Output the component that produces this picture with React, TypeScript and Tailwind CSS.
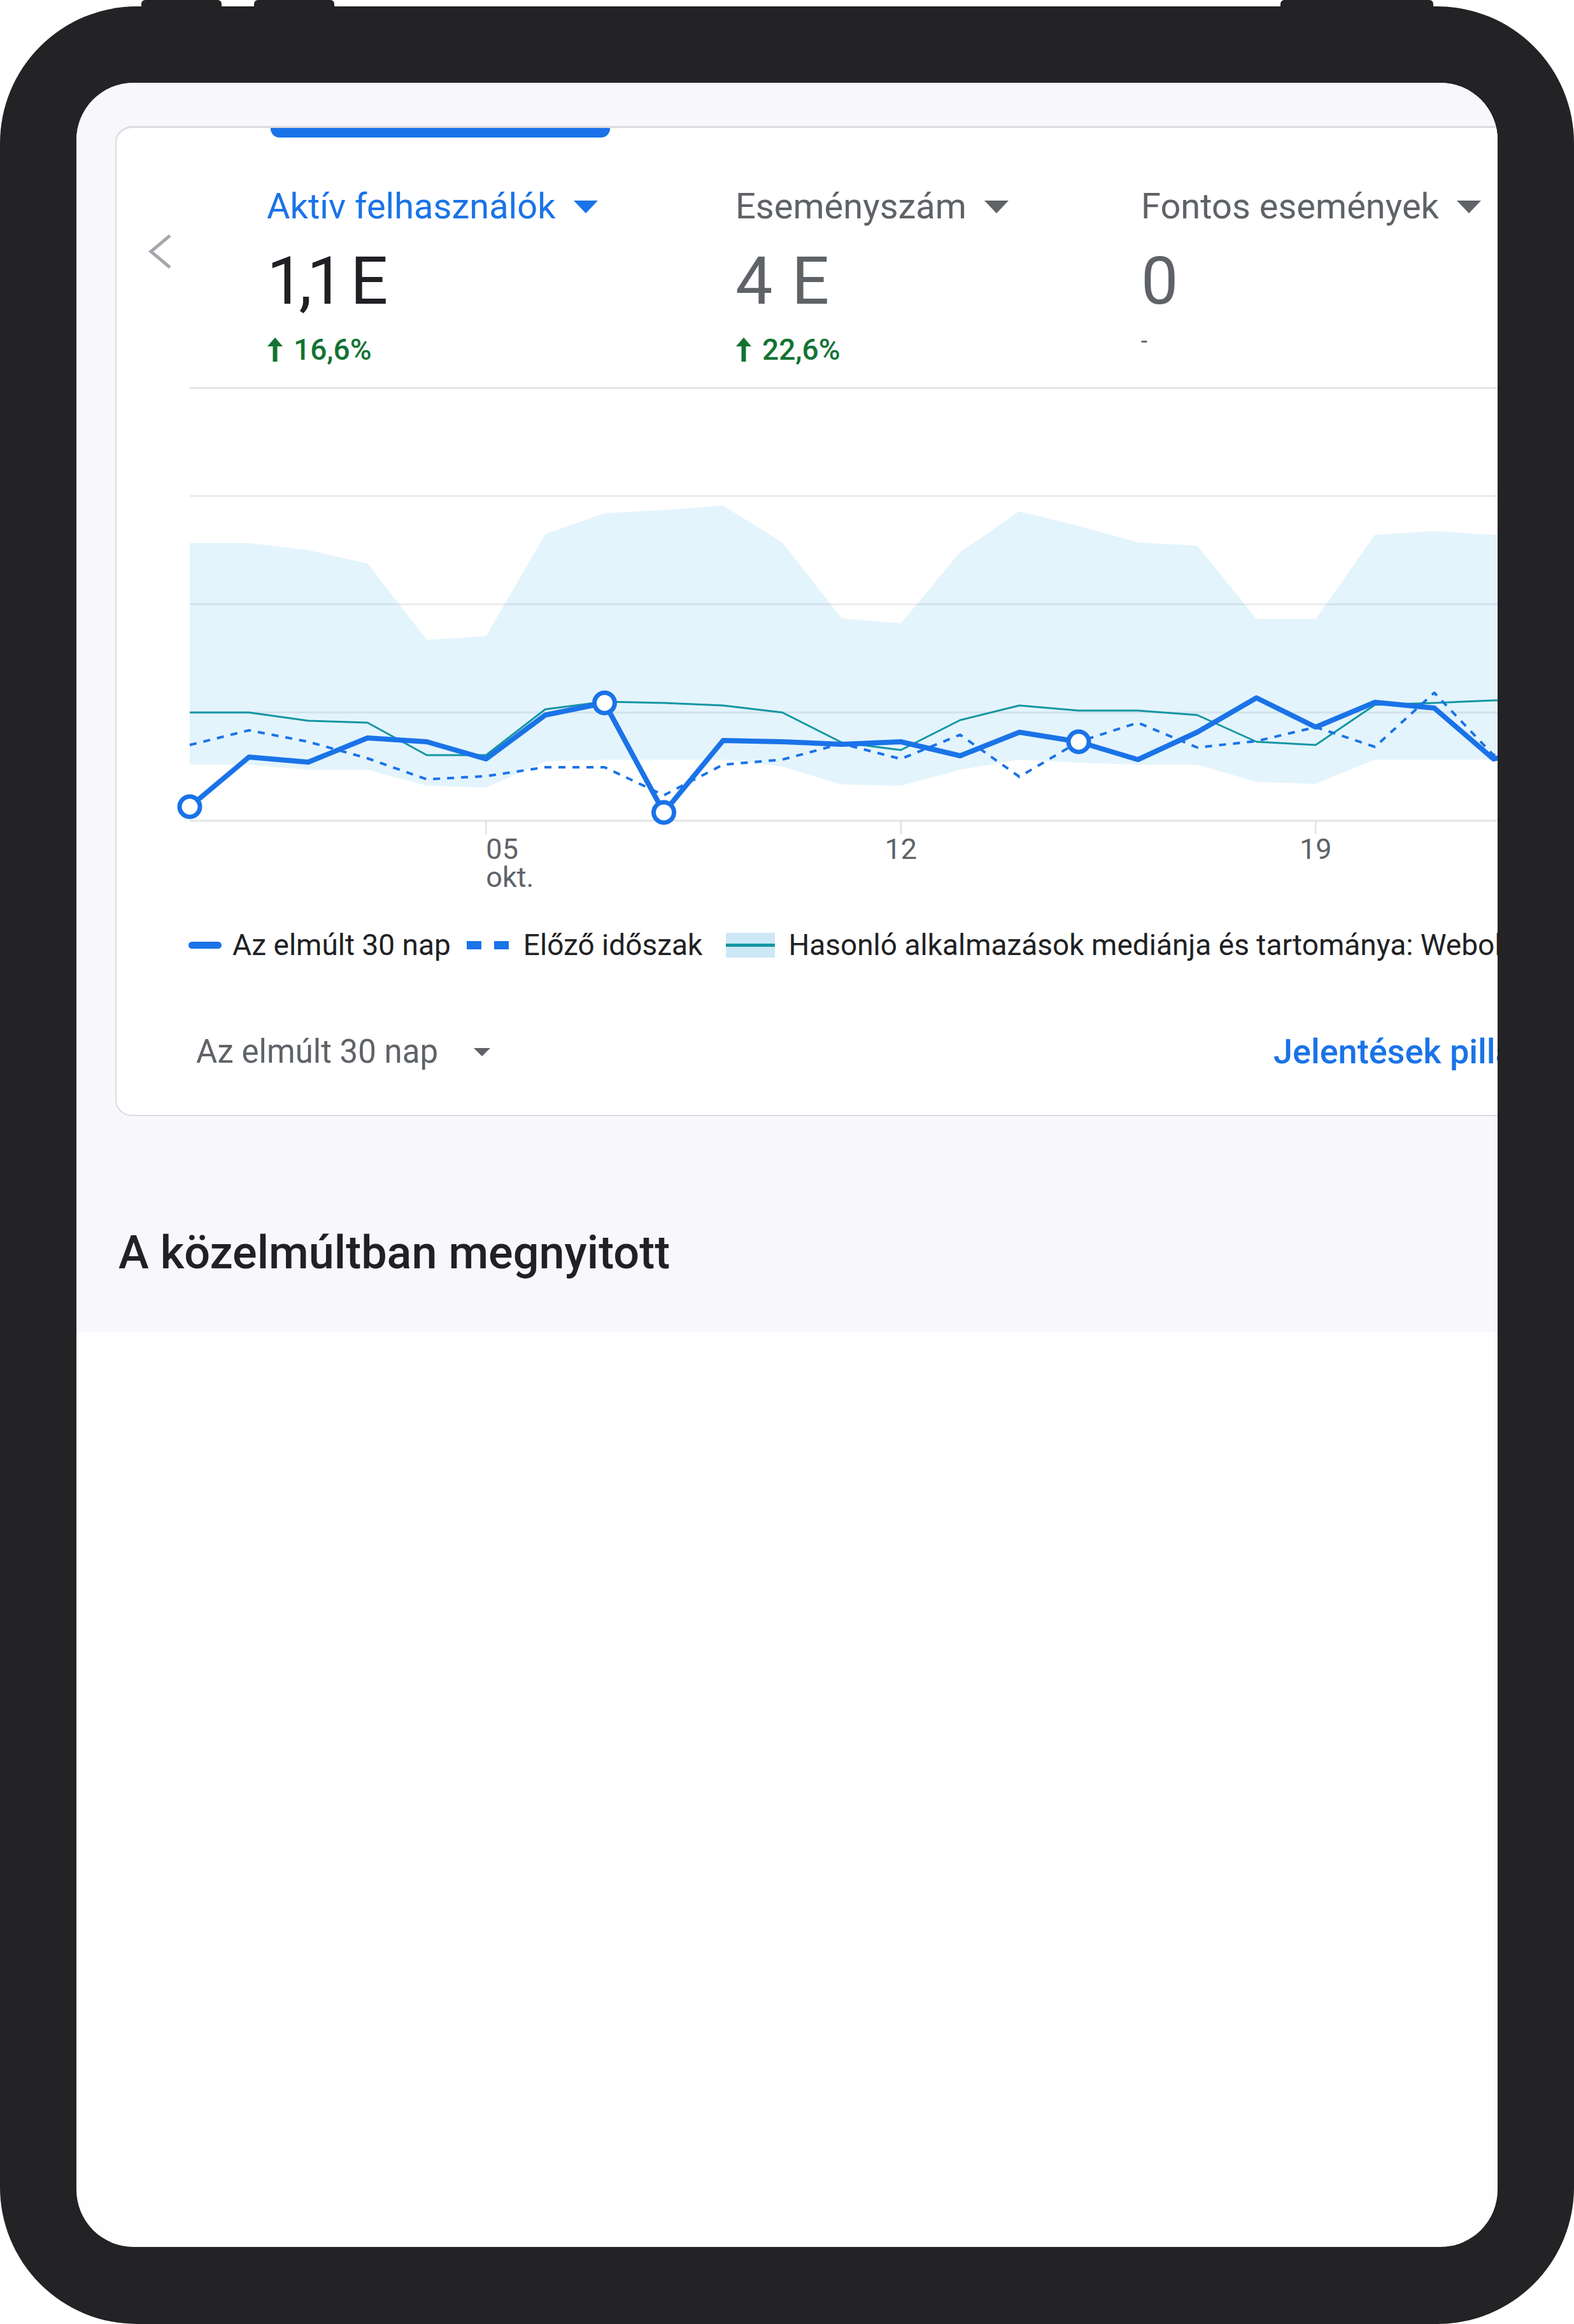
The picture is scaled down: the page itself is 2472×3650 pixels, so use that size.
import React from 'react';

const FONT = { fontFamily: 'Roboto, "Noto Sans", sans-serif' };

const X0 = 115;
const STEP = 93.07;

const main = [656, 578, 586, 548, 554, 581, 512, 493, 665, 552, 554, 558, 554, 576, 539, 554, 582, 539, 485, 531, 492, 501, 581, 560];
const prev = [559, 536, 554, 580, 613, 608, 594, 594, 638, 590, 582, 557, 581, 543, 609, 554, 524, 563, 553, 531, 562, 477, 575, 560];
const median = [508, 508, 521, 524, 575, 575, 503, 491, 493, 497, 508, 555, 567, 520, 497, 505, 505, 512, 554, 559, 496, 493, 489, 489];
const upper = [242, 242, 253, 274, 394, 388, 228, 195, 190, 183, 241, 360, 368, 256, 192, 215, 241, 246, 361, 361, 229, 223, 229, 229];
const lower = [590, 590, 598, 598, 623, 626, 585, 582, 582, 582, 593, 621, 623, 598, 582, 587, 590, 590, 617, 620, 582, 582, 582, 582];

const px = (i: number) => X0 + STEP * i;
const line = (ys: number[]) => ys.map((y, i) => `${i === 0 ? 'M' : 'L'}${px(i).toFixed(1)} ${y}`).join(' ');
const band = () => {
  const top = upper.map((y, i) => `${i === 0 ? 'M' : 'L'}${px(i).toFixed(1)} ${y}`).join(' ');
  const bottom = lower
    .map((y, i) => ({ x: px(i), y }))
    .reverse()
    .map((p) => `L${p.x.toFixed(1)} ${p.y}`)
    .join(' ');
  return `${top} ${bottom} Z`;
};

function Caret({ color, className }: { color: string; className?: string }) {
  return (
    <svg width="38" height="20" viewBox="0 0 38 20" className={className}>
      <polygon points="0,0 38,0 19,20" fill={color} />
    </svg>
  );
}

function UpArrow() {
  return (
    <svg width="26" height="38" viewBox="0 0 26 38" className="mr-[16px]">
      <path d="M13 0 L25 14 H16.5 V38 H9.5 V14 H1 Z" fill="#137333" />
    </svg>
  );
}

function Metric({
  label,
  value,
  change,
  active,
  width,
  tracking,
}: {
  label: string;
  value: string;
  change?: string;
  active?: boolean;
  width?: string;
  tracking: string;
}) {
  return (
    <div className={`flex flex-col shrink-0 ${width ?? ''}`}>
      <div className="flex items-center h-[66px]">
        <span
          className={`text-[56px] leading-[66px] ${active ? 'text-[#1a73e8]' : 'text-[#5f6368]'}`}
        >
          {label}
        </span>
        <Caret color={active ? '#1a73e8' : '#5f6368'} className="ml-[28px] mt-[2px]" />
      </div>
      <div
        className={`mt-[33px] text-[104px] leading-[104px] ${tracking} ${
          active ? 'text-[#202124]' : 'text-[#5f6368]'
        }`}
      >
        {value}
      </div>
      <div className="mt-[30px] h-[50px] flex items-center">
        {change ? (
          <>
            <UpArrow />
            <span className="text-[46px] leading-[50px] font-medium text-[#137333]">{change}</span>
          </>
        ) : (
          <span className="text-[36px] leading-[50px] text-[#5f6368] -mt-[26px]">-</span>
        )}
      </div>
    </div>
  );
}

function Chart() {
  const grid = [168, 338, 508];
  const ticks = [
    { i: 5, a: '05', b: 'okt.', anchor: 'start' },
    { i: 12, a: '12', anchor: 'middle' },
    { i: 19, a: '19', anchor: 'middle' },
  ];
  const markers = [0, 7, 8, 15];
  return (
    <svg width="2300" height="800" viewBox="0 0 2300 800" className="block overflow-visible">
      <path d={band()} fill="#e4f4fc" />
      {grid.map((y) => (
        <line key={y} x1={X0} x2={2300} y1={y} y2={y} stroke="rgba(60,64,90,0.1)" strokeWidth="3" />
      ))}
      <line x1={X0} x2={2300} y1={678} y2={678} stroke="#e3e3e8" strokeWidth="3" />
      {ticks.map((t) => (
        <g key={t.a}>
          <line x1={px(t.i)} x2={px(t.i)} y1={678} y2={699} stroke="#dadce0" strokeWidth="2" />
          <text x={px(t.i)} y={738} fontSize="45" fill="#5f6368" textAnchor={t.anchor} style={FONT}>
            {t.a}
          </text>
          {t.b && (
            <text x={px(t.i)} y={782} fontSize="45" fill="#5f6368" style={FONT}>
              {t.b}
            </text>
          )}
        </g>
      ))}
      <path d={line(median)} fill="none" stroke="#1596a3" strokeWidth="3" strokeLinejoin="round" />
      <path
        d={line(prev)}
        fill="none"
        stroke="#1a73e8"
        strokeWidth="4"
        strokeDasharray="11 11"
        strokeLinejoin="round"
      />
      <path d={line(main)} fill="none" stroke="#1a73e8" strokeWidth="8" strokeLinejoin="round" />
      {markers.map((i) => (
        <circle key={i} cx={px(i)} cy={main[i]} r="16" fill="#ffffff" stroke="#1a73e8" strokeWidth="7" />
      ))}
    </svg>
  );
}

function Legend() {
  return (
    <div className="flex items-center h-[54px] ml-[113px] text-[46px] leading-[54px] text-[#202124] whitespace-nowrap">
      <span className="shrink-0 w-[52px] h-[11px] rounded-full bg-[#1a73e8]" />
      <span className="ml-[17px]">Az elmúlt 30 nap</span>
      <span className="shrink-0 ml-[25px] flex gap-[20px]">
        <span className="w-[23px] h-[13px] bg-[#1a73e8]" />
        <span className="w-[23px] h-[13px] bg-[#1a73e8]" />
      </span>
      <span className="ml-[23px]">Előző időszak</span>
      <span className="shrink-0 ml-[37px] w-[77px] h-[39px] bg-[#cde9f6] flex items-center">
        <span className="w-full h-[5px] bg-[#1596a3]" />
      </span>
      <span className="ml-[21px]">Hasonló alkalmazások mediánja és tartománya: Weboldalak</span>
    </div>
  );
}

export default function App() {
  return (
    <div className="w-[2472px] h-[3650px] bg-white overflow-hidden" style={FONT}>
      <div className="flex h-[10px]">
        <div className="ml-[222px] w-[126px] h-[10px] rounded-t-[6px] bg-[#232225]" />
        <div className="ml-[51px] w-[126px] h-[10px] rounded-t-[6px] bg-[#232225]" />
        <div className="ml-[1486px] w-[240px] h-[10px] rounded-t-[6px] bg-[#232225]" />
      </div>
      <div className="h-[3640px] rounded-[215px] bg-[#232225] pt-[120px] pl-[120px]">
        <div className="w-[2232px] h-[3399px] rounded-[90px] overflow-hidden bg-[#fefefe]">
          <div className="h-[1962px] bg-[#f8f8fc] pt-[68px]">
            <div className="ml-[61px] w-[2300px] bg-white border-2 border-t-[3px] border-[#dadce0] rounded-[26px] pb-[69px] overflow-hidden">
              <div className="ml-[242px] w-[533px] h-[15px] rounded-b-[14px] bg-[#1a73e8]" />
              <div className="flex mt-[75px]">
                <svg width="44" height="60" viewBox="0 0 44 60" className="ml-[47px] mt-[74px] shrink-0">
                  <polyline points="37,5 7,30 37,55" fill="none" stroke="#a4a6ab" strokeWidth="5" />
                </svg>
                <div className="ml-[145px] flex">
                  <Metric
                    label="Aktív felhasználók"
                    value="1,1 E"
                    change="16,6%"
                    active
                    width="w-[736px]"
                    tracking="tracking-[-8px]"
                  />
                  <Metric
                    label="Eseményszám"
                    value="4 E"
                    change="22,6%"
                    width="w-[637px]"
                    tracking="tracking-[2px]"
                  />
                  <Metric label="Fontos események" value="0" tracking="tracking-[0px]" />
                </div>
              </div>
              <div className="mt-[34px] ml-[115px] h-[3px] bg-[#e6e6ea]" />
              <Chart />
              <div className="mt-[46px]">
                <Legend />
              </div>
              <div className="mt-[111px] flex items-center h-[60px] whitespace-nowrap">
                <div className="shrink-0 ml-[125px] w-[1692px] flex items-center">
                  <span className="text-[51px] leading-[60px] text-[#5f6368]">Az elmúlt 30 nap</span>
                  <svg width="26" height="13" viewBox="0 0 26 13" className="ml-[56px]">
                    <polygon points="0,0 26,0 13,13" fill="#5f6368" />
                  </svg>
                </div>
                <span className="shrink-0 text-[54px] leading-[60px] font-medium text-[#1a73e8]">
                  Jelentések pillanatképe
                </span>
              </div>
            </div>
            <h2 className="mt-[173px] ml-[66px] text-[72px] leading-[84px] font-medium text-[#202124]">
              A közelmúltban megnyitott
            </h2>
          </div>
        </div>
      </div>
    </div>
  );
}
